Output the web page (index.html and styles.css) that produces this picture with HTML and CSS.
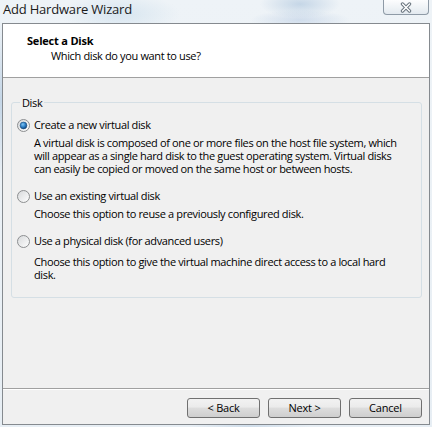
FILE: index.html
```html
<!DOCTYPE html>
<html>
<head>
<meta charset="utf-8">
<link rel="stylesheet" href="styles.css">
</head>
<body>
<div class="window">
  <div class="titlebar">
    <span class="title">Add Hardware Wizard</span>
    <div class="close">
      <svg width="14" height="11" viewBox="0 0 14 11">
        <path d="M3.5 2 L10.5 9 M10.5 2 L3.5 9" stroke="#66727c" stroke-width="3.4" stroke-linecap="round" fill="none"/>
        <path d="M3.5 2 L10.5 9 M10.5 2 L3.5 9" stroke="#ffffff" stroke-width="1.5" stroke-linecap="round" fill="none"/>
      </svg>
    </div>
  </div>
  <div class="client">
    <div class="header">
      <div class="h-title">Select a Disk</div>
      <div class="h-sub">Which disk do you want to use?</div>
    </div>
    <div class="body">
      <fieldset class="group">
        <legend>Disk</legend>
        <div class="option">
          <div class="opt-label">
            <svg class="radio" width="13" height="13" viewBox="0 0 13 13">
              <defs>
                <linearGradient id="rf1" x1="0" y1="0" x2="1" y2="1">
                  <stop offset="0" stop-color="#d6d8da"/>
                  <stop offset="1" stop-color="#ffffff"/>
                </linearGradient>
                <radialGradient id="dot" cx="0.4" cy="0.35" r="0.7">
                  <stop offset="0" stop-color="#7fc4f2"/>
                  <stop offset="0.55" stop-color="#2a7cc4"/>
                  <stop offset="1" stop-color="#0c3c70"/>
                </radialGradient>
              </defs>
              <circle cx="6.5" cy="6.5" r="6" fill="url(#rf1)" stroke="#8c8e90" stroke-width="1"/>
              <circle cx="6.5" cy="6.5" r="3.4" fill="url(#dot)" stroke="#1d4f80" stroke-width="0.6"/>
            </svg>
            <span>Create a new virtual disk</span>
          </div>
          <div class="opt-desc">A virtual disk is composed of one or more files on the host file system, which<br>will appear as a single hard disk to the guest operating system. Virtual disks<br>can easily be copied or moved on the same host or between hosts.</div>
        </div>
        <div class="option">
          <div class="opt-label">
            <svg class="radio" width="13" height="13" viewBox="0 0 13 13">
              <circle cx="6.5" cy="6.5" r="6" fill="url(#rf1)" stroke="#8c8e90" stroke-width="1"/>
            </svg>
            <span>Use an existing virtual disk</span>
          </div>
          <div class="opt-desc">Choose this option to reuse a previously configured disk.</div>
        </div>
        <div class="option">
          <div class="opt-label">
            <svg class="radio" width="13" height="13" viewBox="0 0 13 13">
              <circle cx="6.5" cy="6.5" r="6" fill="url(#rf1)" stroke="#8c8e90" stroke-width="1"/>
            </svg>
            <span>Use a physical disk (for advanced users)</span>
          </div>
          <div class="opt-desc opt-desc-wide">Choose this option to give the virtual machine direct access to a local hard<br>disk.</div>
        </div>
      </fieldset>
      <div class="spacer"></div>
      <div class="separator"></div>
      <div class="footer">
        <button class="btn">&lt; Back</button>
        <button class="btn">Next &gt;</button>
        <button class="btn">Cancel</button>
      </div>
    </div>
  </div>
</div>
</body>
</html>
```
FILE: styles.css
```css
html, body {
  margin: 0;
  padding: 0;
}
body {
  width: 432px;
  height: 427px;
  overflow: hidden;
  font-family: "Open Sans", "Noto Sans", sans-serif;
  font-size: 11px;
  letter-spacing: -0.36px;
  color: #000;
  background-color: #e6eef4;
  background-image:
    radial-gradient(ellipse 40px 14px at 300px 4px, rgba(120,160,200,0.35), transparent),
    radial-gradient(ellipse 50px 10px at 300px 20px, rgba(140,170,210,0.3), transparent),
    radial-gradient(ellipse 60px 20px at 120px 14px, rgba(200,220,235,0.6), transparent),
    radial-gradient(ellipse 30px 80px at 0px 100px, rgba(120,160,200,0.35), transparent),
    radial-gradient(ellipse 60px 10px at 250px 427px, rgba(150,180,210,0.3), transparent),
    linear-gradient(180deg, #eef3f7, #e7eef4);
}
.window {
  height: 427px;
  display: flex;
  flex-direction: column;
}
.titlebar {
  height: 23px;
  display: flex;
  justify-content: space-between;
  align-items: flex-start;
  flex: none;
}
.title {
  font-size: 13px;
  letter-spacing: -0.2px;
  line-height: 19px;
  padding-left: 3px;
  color: #1a1a1a;
}
.close {
  width: 44px;
  height: 14px;
  margin-right: 3px;
  border: 1px solid #8e9aa6;
  border-top: none;
  border-radius: 0 0 4px 4px;
  background: linear-gradient(180deg, rgba(255,255,255,0.85), rgba(225,232,238,0.85));
  display: flex;
  align-items: center;
  justify-content: center;
}
.client {
  margin: 0 2px 0 2px;
  height: 402px;
  box-sizing: border-box;
  border: 1px solid #858a8f;
  background: #f0f0f0;
  display: flex;
  flex-direction: column;
}
.header {
  flex: none;
  background: #fff;
  border-bottom: 1px solid #a0a0a0;
  padding: 9px 0 0 24px;
  height: 44px;
}
.h-title {
  font-weight: bold;
  line-height: 15px;
  letter-spacing: -0.2px;
}
.h-sub {
  line-height: 15px;
  padding-left: 24px;
}
.body {
  flex: 1;
  display: flex;
  flex-direction: column;
}
.group {
  margin: 17px 7px 0 8px;
  padding: 8px 6px 12px 5px;
  border: 1px solid #d5dfe5;
  border-radius: 3px;
  height: 203px;
  box-sizing: border-box;
  min-width: 0;
}
.group legend {
  padding: 0 2px;
  margin-left: 3px;
  line-height: 15px;
}
.option {
  margin-bottom: 14px;
}
.opt-label {
  display: flex;
  align-items: center;
  gap: 4px;
  line-height: 14px;
}
.radio {
  flex: none;
}
.opt-desc {
  margin: 4px 0 0 17px;
  line-height: 13px;
  white-space: nowrap;
}
.opt-desc-wide {
  margin-top: 7px;
}
.spacer {
  flex: 1;
}
.separator {
  height: 0;
  border-top: 1px solid #a0a0a0;
  border-bottom: 1px solid #fff;
}
.footer {
  display: flex;
  justify-content: flex-end;
  gap: 8px;
  padding: 8px 7px 6px 0;
}
.btn {
  width: 73px;
  height: 20px;
  box-sizing: border-box;
  border: 1px solid #707070;
  border-radius: 3px;
  background: linear-gradient(180deg, #f2f2f2 0%, #ebebeb 45%, #dddddd 50%, #cfcfcf 100%);
  font-family: "Open Sans", "Noto Sans", sans-serif;
  font-size: 11px;
  letter-spacing: -0.2px;
  color: #000;
  padding: 0;
  line-height: 16px;
}
```
